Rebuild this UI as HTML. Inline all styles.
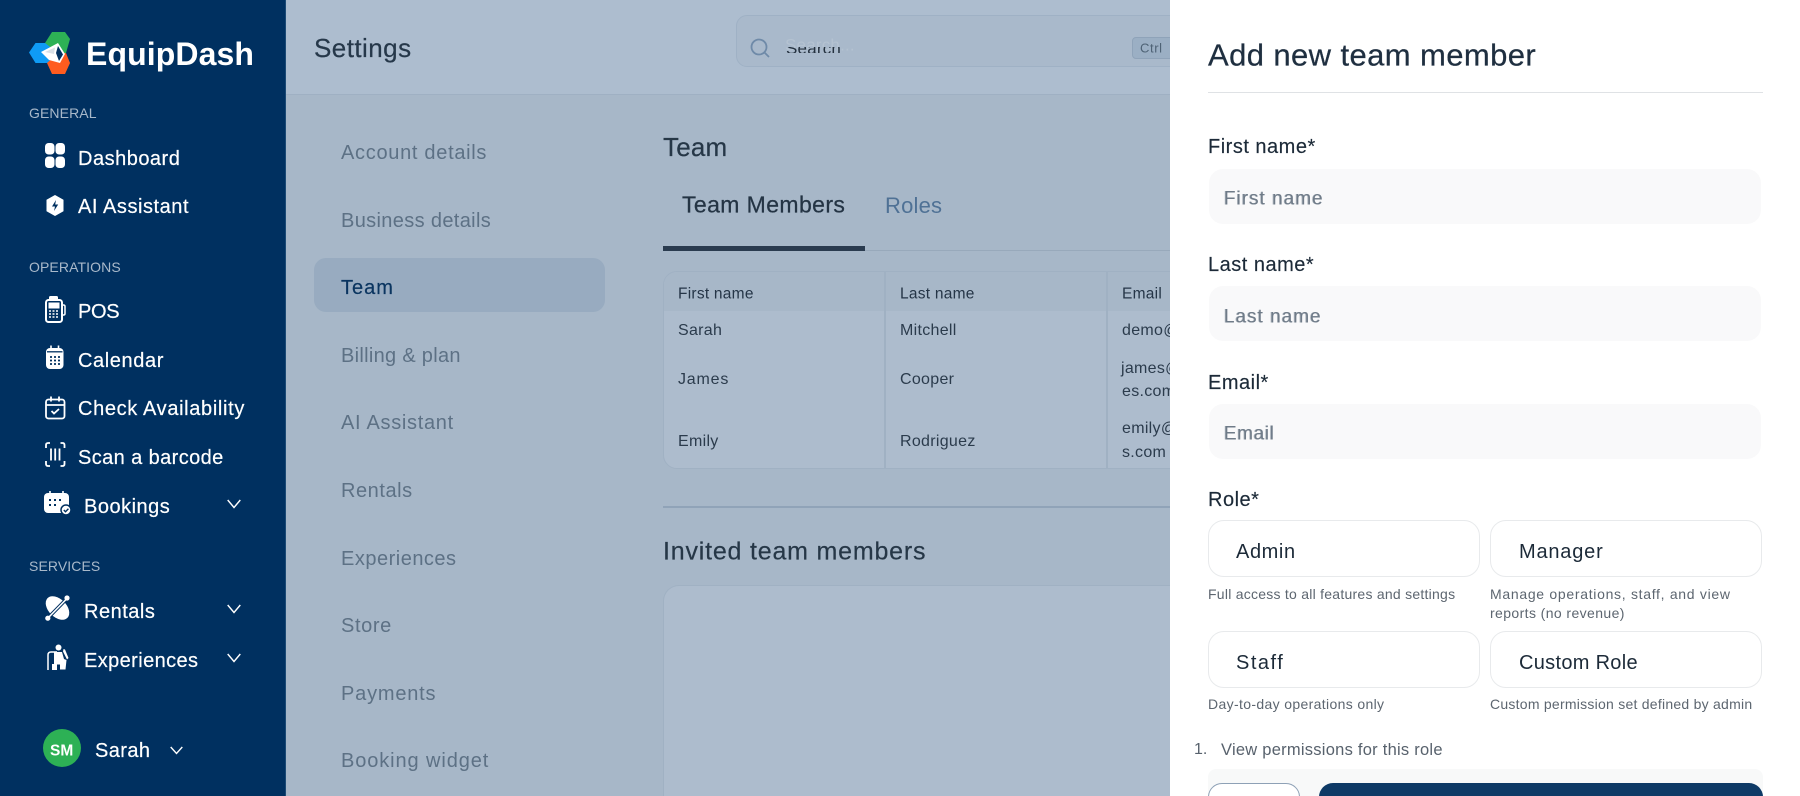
<!DOCTYPE html>
<html lang="en"><head><meta charset="utf-8"><title>EquipDash Settings</title>
<style>
*{box-sizing:border-box;margin:0;padding:0}
html,body{width:1800px;height:796px;overflow:hidden;background:#a7b7c8;font-family:"Liberation Sans",sans-serif}
#root{position:relative;width:1800px;height:796px;overflow:hidden}
.a{position:absolute}
.t{position:absolute;white-space:nowrap;line-height:1;transform:translateY(-50%)}
#side{left:0;top:0;width:286px;height:796px;background:#003060;border-right:1px solid #1c4a75}
#side .t{color:#fff}
.n{font-size:20px;letter-spacing:.5px;-webkit-text-stroke:.2px #fff}
.g{font-size:14px;color:#a9b9ca!important;letter-spacing:.1px}
svg{position:absolute;overflow:visible}
#head{left:286px;top:0;width:884px;height:95px;background:#adbdcf;border-bottom:1px solid #9fb0c3}
.sn{font-size:20px;color:#5d7185;letter-spacing:.4px}
.th{font-size:15.5px;color:#253547;letter-spacing:.25px}
.td{font-size:16px;color:#2b3b4c;letter-spacing:.3px}
#panel{left:1170px;top:0;width:630px;height:796px;background:#fff;overflow:hidden}
.lb{font-size:20px;color:#1c2a38;letter-spacing:.5px;-webkit-text-stroke:.15px #1c2a38}
.in{position:absolute;left:39px;width:552px;height:55px;background:#f9f9fa;border-radius:14px}
.ph{font-size:19px;color:#6f7b88;text-shadow:-.8px 0 #aab2ba;letter-spacing:1px}
.card{position:absolute;width:272px;height:57px;border:1.5px solid #e8eaec;border-radius:16px;background:#fff}
.ct{font-size:20px;color:#1c2a38;letter-spacing:.6px}
.ds{font-size:14px;color:#5d6670;letter-spacing:.25px}
</style></head><body><div id="root">

<div id="side" class="a">
<svg style="left:0;top:0" width="90" height="90" viewBox="0 0 90 90">
<polygon points="29,52.500 35.500,43 50,43 50,63 35.500,63" fill="#0f9bf5"/>
<polygon points="45,43 52,32 65,32 70,39 66,53 58,53" fill="#2db155"/>
<polygon points="47,63 58,53 66,53 70,63 65,74 52,74" fill="#ff5c1f"/>
<polygon points="41,52 58,43 65,54 60,63 49,60" fill="#fff"/>
<polygon points="58,46 63,54.500 59,61 56,53" fill="#003060"/>
<polygon points="45,52 55,47.500 54,54" fill="#003060" opacity=".15"/>
</svg>
<div class="t" style="left:86px;top:54px;font-size:32px;font-weight:700;letter-spacing:.1px">EquipDash</div>

<div class="t g" style="left:29px;top:113px">GENERAL</div>
<svg style="left:45px;top:143px" width="20" height="25"><rect width="9.500" height="11.500" rx="3.600" fill="#fff"/><rect x="10.500" width="9.500" height="11.500" rx="3.600" fill="#fff"/><rect y="13.500" width="9.500" height="11.500" rx="3.600" fill="#fff"/><rect x="10.500" y="13.500" width="9.500" height="11.500" rx="3.600" fill="#fff"/></svg>
<div class="t n" style="left:78px;top:159px">Dashboard</div>
<svg style="left:46px;top:195px" width="18" height="21"><path d="M9 .5 17 5v11l-8 4.500L1 16V5z" fill="#fff" stroke="#fff" stroke-linejoin="round"/><path d="M10 5 6 11.500h3L8 16l4.200-6.500h-3z" fill="#003060"/></svg>
<div class="t n" style="left:78px;top:207px;letter-spacing:.55px">AI Assistant</div>

<div class="t g" style="left:29px;top:266.500px">OPERATIONS</div>
<svg style="left:45px;top:295px" width="21" height="28"><path d="M4 5V2.500Q4 1 5.500 1h6Q13 1 13 2.500V5z" fill="#fff"/><rect x="1" y="5" width="16" height="22" rx="2.500" fill="none" stroke="#fff" stroke-width="2"/><rect x="3.500" y="7.500" width="11" height="6" fill="#fff"/><path d="M4 16h2m1.500 0h2m1.500 0h2M4 19h2m1.500 0h2m1.500 0h2M4 22h2m1.500 0h2m1.500 0h2" stroke="#fff" stroke-width="1.500"/><path d="M17 10h1.500q1.500 0 1.500 1.500v7q0 1.500-1.500 1.500H17" fill="none" stroke="#fff" stroke-width="1.500"/></svg>
<div class="t n" style="left:78px;top:312px;letter-spacing:-.3px">POS</div>
<svg style="left:46px;top:345px" width="18" height="25"><rect y="3" width="17.500" height="21" rx="4" fill="#fff"/><path d="M5 .5v4.500M12.500.5v4.500" stroke="#fff" stroke-width="1.600"/><path d="M1 6.800h15.500" stroke="#003060" stroke-width="1.300"/><path d="M4 12h2m2 0h2m2 0h2M4 15.500h2m2 0h2m2 0h2M4 19h2m2 0h2m2 0h2" stroke="#003060" stroke-width="1.800"/></svg>
<div class="t n" style="left:78px;top:361px;letter-spacing:.6px">Calendar</div>
<svg style="left:45px;top:396px" width="21" height="24"><rect x="1" y="3.500" width="18.500" height="19" rx="2.500" fill="none" stroke="#fff" stroke-width="1.800"/><path d="M1 9h18.500" stroke="#fff" stroke-width="1.800"/><path d="M6 .5v5M14 .5v5" stroke="#fff" stroke-width="1.800"/><path d="m6.500 15 2.500 2.500 5-4.500" fill="none" stroke="#fff" stroke-width="1.800"/></svg>
<div class="t n" style="left:78px;top:409px;letter-spacing:.65px">Check Availability</div>
<svg style="left:45px;top:442px" width="21" height="25" fill="none" stroke="#fff" stroke-width="1.800"><path d="M5 1H3Q1 1 1 3v3M15.500 1h2q2 0 2 2v3M5 24H3q-2 0-2-2v-3M15.500 24h2q2 0 2-2v-3"/><path d="M6 6.500v12M10.200 6.500v12M14.500 6.500v12"/></svg>
<div class="t n" style="left:78px;top:458px;letter-spacing:.4px">Scan a barcode</div>
<svg style="left:44px;top:491px" width="27" height="25"><rect y="2" width="25" height="20" rx="4" fill="#fff"/><path d="M6 0v4M19 0v4" stroke="#fff" stroke-width="1.600"/><path d="M5 9h2m3 0h2m3 0h2M5 14h2m3 0h2" stroke="#003060" stroke-width="2"/><circle cx="22" cy="19" r="5" fill="#fff" stroke="#003060" stroke-width="1.500"/><path d="m19.800 19 1.700 1.700 2.900-2.900" fill="none" stroke="#003060" stroke-width="1.400"/></svg>
<div class="t n" style="left:84px;top:507px">Bookings</div>
<svg style="left:227px;top:499px" width="14" height="10"><path d="M.7 1 7 8.500 13.300 1" fill="none" stroke="#fff" stroke-width="1.400"/></svg>

<div class="t g" style="left:29px;top:566px">SERVICES</div>
<svg style="left:45px;top:595px" width="25" height="26"><ellipse cx="12.500" cy="13" rx="14" ry="9" transform="rotate(45 12.500 13)" fill="#fff"/><path d="M2 24 23 2.500" stroke="#003060" stroke-width="3.400"/><path d="M3 23 22 3.500" stroke="#fff" stroke-width="1.600"/><circle cx="22" cy="3" r="2.600" fill="#fff"/><circle cx="2.800" cy="23.200" r="2.600" fill="#fff"/></svg>
<div class="t n" style="left:84px;top:612px">Rentals</div>
<svg style="left:227px;top:604px" width="14" height="10"><path d="M.7 1 7 8.500 13.300 1" fill="none" stroke="#fff" stroke-width="1.400"/></svg>
<svg style="left:47px;top:644px" width="22" height="27"><circle cx="11.500" cy="3.500" r="3" fill="#fff"/><path d="M1 26V11Q1 8 4 8h6" fill="none" stroke="#fff" stroke-width="1.500"/><path d="M7 8h8l2 7 2.500 1-1 9.500H13v-5H7z" fill="#fff"/><path d="M16.500 5l1.500.5 3.500 8.500-1.500 1.500-4-8z" fill="#fff"/><path d="M5 20h5v6H5z" fill="#fff"/></svg>
<div class="t n" style="left:84px;top:661px;letter-spacing:.4px">Experiences</div>
<svg style="left:227px;top:653px" width="14" height="10"><path d="M.7 1 7 8.500 13.300 1" fill="none" stroke="#fff" stroke-width="1.400"/></svg>

<div class="a" style="left:43px;top:729px;width:38px;height:38px;border-radius:50%;background:#2db155"></div>
<div class="t" style="left:50px;top:751px;font-size:15.500px;font-weight:700">SM</div>
<div class="t n" style="left:95px;top:751px;letter-spacing:.4px">Sarah</div>
<svg style="left:170px;top:746px" width="13" height="9"><path d="M.7 1 6.500 7.500 12.300 1" fill="none" stroke="#fff" stroke-width="1.400"/></svg>
</div>

<div id="head" class="a"></div>
<div class="t" style="left:314px;top:48px;font-size:26px;color:#26384a;letter-spacing:.45px;-webkit-text-stroke:.2px #26384a">Settings</div>
<div class="a" style="left:736px;top:15px;width:460px;height:52px;border:1.500px solid #9fb1c5;border-radius:11px;background:#a9b9cb"></div>
<svg style="left:750px;top:38px" width="20" height="20" fill="none" stroke="#6f8aa8" stroke-width="1.800"><circle cx="9" cy="9" r="7.500"/><path d="m14.500 14.500 4.500 4.500"/></svg>
<div class="t" style="left:785px;top:45px;font-size:17px;color:#b4c2d1;letter-spacing:.2px">Search...</div>
<div class="a" style="left:785px;top:46.500px;width:60px;height:6px;overflow:hidden"><div style="position:absolute;left:1px;top:-6px;font-size:17px;line-height:15px;color:#24313f;letter-spacing:.2px;white-space:nowrap">Search</div></div>
<div class="a" style="left:1132px;top:37px;width:45px;height:22px;background:#9bafc4;border:1px solid #8fa3b9;border-radius:4px"></div>
<div class="t" style="left:1140px;top:48px;font-size:13px;color:#4e6275;letter-spacing:.6px">Ctrl</div>

<div class="a" style="left:314px;top:258px;width:291px;height:54px;background:#98abc0;border-radius:12px"></div>
<div class="t sn" style="left:341px;top:153px;letter-spacing:.7px">Account details</div>
<div class="t sn" style="left:341px;top:221px;letter-spacing:.35px">Business details</div>
<div class="t sn" style="left:341px;top:288px;color:#0b3560;-webkit-text-stroke:.2px #0b3560;letter-spacing:1px">Team</div>
<div class="t sn" style="left:341px;top:356px;letter-spacing:.3px">Billing &amp; plan</div>
<div class="t sn" style="left:341px;top:423px;letter-spacing:.7px">AI Assistant</div>
<div class="t sn" style="left:341px;top:491px;letter-spacing:.55px">Rentals</div>
<div class="t sn" style="left:341px;top:559px;letter-spacing:.5px">Experiences</div>
<div class="t sn" style="left:341px;top:626px;letter-spacing:.6px">Store</div>
<div class="t sn" style="left:341px;top:694px;letter-spacing:.8px">Payments</div>
<div class="t sn" style="left:341px;top:761px;letter-spacing:.9px">Booking widget</div>

<div class="t" style="left:663px;top:147px;font-size:26px;color:#263747;letter-spacing:.2px;-webkit-text-stroke:.2px #263747">Team</div>
<div class="t" style="left:682px;top:205px;font-size:23px;color:#243444;letter-spacing:.4px;-webkit-text-stroke:.25px #243444">Team Members</div>
<div class="t" style="left:885px;top:206px;font-size:22px;color:#4f7195;letter-spacing:.2px">Roles</div>
<div class="a" style="left:663px;top:250px;width:507px;height:1px;background:#98a9bb"></div>
<div class="a" style="left:663px;top:246px;width:202px;height:5px;background:#2a3b4f"></div>

<div class="a" style="left:663px;top:271px;width:530px;height:198px;border:1px solid #a0b1c3;border-radius:14px;background:#adbccd;overflow:hidden">
<div class="a" style="left:0;top:0;width:100%;height:39px;background:#a7b7c8"></div>
<div class="a" style="left:220px;top:0;width:1.500px;height:100%;background:#a0b1c3"></div>
<div class="a" style="left:442px;top:0;width:1.500px;height:100%;background:#a0b1c3"></div>
</div>
<div class="t th" style="left:678px;top:294px">First name</div>
<div class="t th" style="left:900px;top:294px">Last name</div>
<div class="t th" style="left:1122px;top:294px">Email</div>
<div class="t td" style="left:678px;top:331px">Sarah</div>
<div class="t td" style="left:900px;top:331px">Mitchell</div>
<div class="t td" style="left:678px;top:380px;letter-spacing:.8px">James</div>
<div class="t td" style="left:900px;top:380px">Cooper</div>
<div class="t td" style="left:678px;top:442px">Emily</div>
<div class="t td" style="left:900px;top:442px">Rodriguez</div>
<div class="t td" style="left:1122px;top:331px">demo@</div>
<div class="t td" style="left:1121px;top:369px">james@</div>
<div class="t td" style="left:1122px;top:392px">es.com</div>
<div class="t td" style="left:1122px;top:429px">emily@</div>
<div class="t td" style="left:1122px;top:453px">s.com</div>

<div class="a" style="left:663px;top:506px;width:507px;height:2px;background:#90a3b8"></div>
<div class="t" style="left:663px;top:552px;font-size:25px;color:#263747;letter-spacing:.8px;-webkit-text-stroke:.2px #263747">Invited team members</div>
<div class="a" style="left:663px;top:585px;width:530px;height:211px;border:1px solid #a0b1c3;border-bottom:0;border-radius:16px 16px 0 0;background:#adbccd"></div>

<div id="panel" class="a">
<div class="t" style="left:38px;top:55px;font-size:31px;color:#1f2f40;letter-spacing:.4px;-webkit-text-stroke:.25px #1f2f40">Add new team member</div>
<div class="a" style="left:38px;top:92px;width:555px;height:1px;background:#dfe2e5"></div>

<div class="t lb" style="left:38px;top:147px">First name*</div>
<div class="in" style="top:169px"></div>
<div class="t ph" style="left:54px;top:199px">First name</div>

<div class="t lb" style="left:38px;top:265px">Last name*</div>
<div class="in" style="top:286px"></div>
<div class="t ph" style="left:54px;top:317px">Last name</div>

<div class="t lb" style="left:38px;top:383px">Email*</div>
<div class="in" style="top:404px"></div>
<div class="t ph" style="left:54px;top:434px;letter-spacing:.6px">Email</div>

<div class="t lb" style="left:38px;top:500px">Role*</div>
<div class="card" style="left:38px;top:520px"></div>
<div class="t ct" style="left:66px;top:552px">Admin</div>
<div class="card" style="left:320px;top:520px"></div>
<div class="t ct" style="left:349px;top:552px;letter-spacing:.8px">Manager</div>
<div class="t ds" style="left:38px;top:594px">Full access to all features and settings</div>
<div class="t ds" style="left:320px;top:593.500px;letter-spacing:.7px">Manage operations, staff, and view</div>
<div class="t ds" style="left:320px;top:613px;letter-spacing:.4px">reports (no revenue)</div>
<div class="card" style="left:38px;top:631px"></div>
<div class="t ct" style="left:66px;top:663px;letter-spacing:1.500px">Staff</div>
<div class="card" style="left:320px;top:631px"></div>
<div class="t ct" style="left:349px;top:663px;letter-spacing:.3px">Custom Role</div>
<div class="t ds" style="left:38px;top:704px;letter-spacing:.35px">Day-to-day operations only</div>
<div class="t ds" style="left:320px;top:704px">Custom permission set defined by admin</div>

<div class="t" style="left:24px;top:750px;font-size:16px;color:#58626d">1.</div>
<div class="t" style="left:51px;top:750px;font-size:16.500px;color:#58626d;letter-spacing:.25px">View permissions for this role</div>

<div class="a" style="left:38px;top:769px;width:555px;height:40px;background:#f8f9f9;border-radius:8px 8px 0 0"></div>
<div class="a" style="left:38px;top:783px;width:92px;height:40px;background:#fff;border:1.500px solid #8ea1b6;border-radius:14px"></div>
<div class="a" style="left:149px;top:783px;width:444px;height:40px;background:#0e3a66;border-radius:14px"></div>
</div>
</div></body></html>
